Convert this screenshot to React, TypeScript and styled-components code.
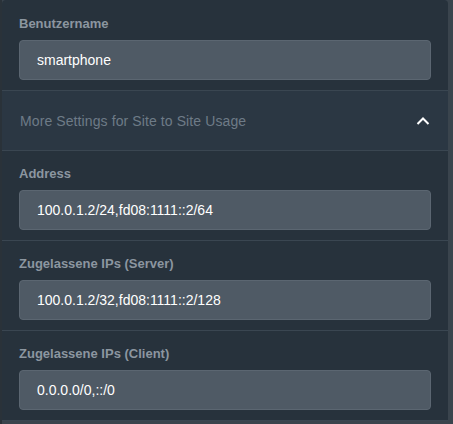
import React from 'react'
import styled, { createGlobalStyle } from 'styled-components'

const GlobalStyle = createGlobalStyle`
  html, body {
    margin: 0;
    padding: 0;
    background: #38424b;
    font-family: 'Liberation Sans', Arial, sans-serif;
  }
`

const Page = styled.div`
  width: 453px;
  height: 424px;
  overflow: hidden;
  background: linear-gradient(90deg, #2a3239 0, #2a3239 2px, transparent 2px), #3a444d;
`

const Panel = styled.div`
  margin-left: 2px;
  width: 446px;
  padding-top: 1px;
  background: #27323c;
  border-radius: 4px 4px 0 0;
`

const Section = styled.div`
  display: flex;
  flex-direction: column;
  gap: 8px;
  padding: 15px 17px 10px 17px;
  border-bottom: 1px solid #3a4651;
`

const Label = styled.label`
  font-size: 13px;
  line-height: 16px;
  font-weight: bold;
  color: #8c96a0;
`

const Input = styled.input`
  box-sizing: border-box;
  width: 412px;
  height: 40px;
  padding: 0 17px;
  background: #4f5a65;
  border: 1px solid #5b6671;
  border-radius: 4px;
  color: #ffffff;
  font-family: inherit;
  font-size: 14px;
  outline: none;
`

const AccordionHeader = styled.div`
  display: flex;
  align-items: center;
  justify-content: space-between;
  height: 59px;
  padding: 0 18px 0 18px;
  background: #2b3743;
  border-bottom: 1px solid #3a4651;
  color: #6e7b87;
  font-size: 14px;
  letter-spacing: 0.1px;
`

const Chevron = () => (
  <svg width="14" height="10" viewBox="0 0 14 10">
    <path d="M1.5 8 L7 2.5 L12.5 8" fill="none" stroke="#ffffff" strokeWidth="2" />
  </svg>
)

const Field: React.FC<{ label: string; value: string }> = ({ label, value }) => (
  <Section>
    <Label>{label}</Label>
    <Input defaultValue={value} />
  </Section>
)

export default function App() {
  return (
    <Page>
      <GlobalStyle />
      <Panel>
        <Field label="Benutzername" value="smartphone" />
        <AccordionHeader>
          <span>More Settings for Site to Site Usage</span>
          <Chevron />
        </AccordionHeader>
        <Field label="Address" value="100.0.1.2/24,fd08:1111::2/64" />
        <Field label="Zugelassene IPs (Server)" value="100.0.1.2/32,fd08:1111::2/128" />
        <Field label="Zugelassene IPs (Client)" value="0.0.0.0/0,::/0" />
      </Panel>
    </Page>
  )
}
